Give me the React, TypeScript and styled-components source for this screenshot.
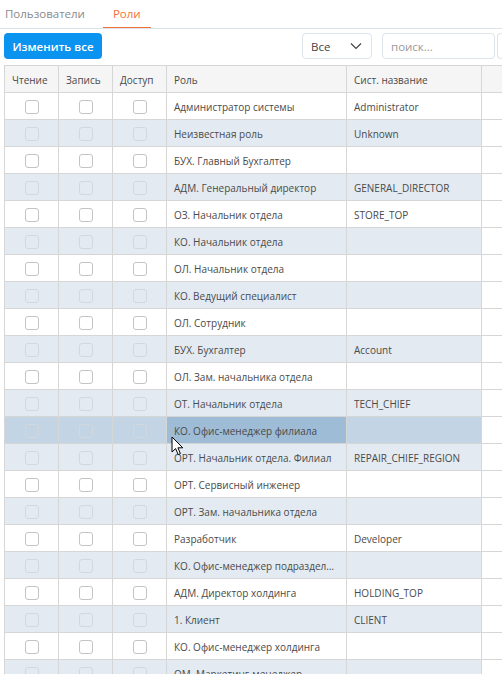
import React from "react";
import styled, { createGlobalStyle } from "styled-components";

type Role = {
  name: string;
  code?: string;
};

const ROLES: Role[] = [
  { name: "Администратор системы", code: "Administrator" },
  { name: "Неизвестная роль", code: "Unknown" },
  { name: "БУХ. Главный Бухгалтер" },
  { name: "АДМ. Генеральный директор", code: "GENERAL_DIRECTOR" },
  { name: "ОЗ. Начальник отдела", code: "STORE_TOP" },
  { name: "КО. Начальник отдела" },
  { name: "ОЛ. Начальник отдела" },
  { name: "КО. Ведущий специалист" },
  { name: "ОЛ. Сотрудник" },
  { name: "БУХ. Бухгалтер", code: "Account" },
  { name: "ОЛ. Зам. начальника отдела" },
  { name: "ОТ. Начальник отдела", code: "TECH_CHIEF" },
  { name: "КО. Офис-менеджер филиала" },
  { name: "ОРТ. Начальник отдела. Филиал", code: "REPAIR_CHIEF_REGION" },
  { name: "ОРТ. Сервисный инженер" },
  { name: "ОРТ. Зам. начальника отдела" },
  { name: "Разработчик", code: "Developer" },
  { name: "КО. Офис-менеджер подразделения" },
  { name: "АДМ. Директор холдинга", code: "HOLDING_TOP" },
  { name: "1. Клиент", code: "CLIENT" },
  { name: "КО. Офис-менеджер холдинга" },
  { name: "ОМ. Маркетинг-менеджер" },
];

// row under the mouse pointer in the screenshot
const HOVER_INDEX = 12;

const GlobalStyle = createGlobalStyle`
  html, body {
    margin: 0;
    padding: 0;
    background: #fff;
    overflow: hidden;
  }
  body {
    font-family: "Open Sans", "Noto Sans", sans-serif;
    color: #4a4a4a;
  }
`;

export default function App() {
  return (
    <Page>
      <GlobalStyle />
      <Tabs>
        <Tab>Пользователи</Tab>
        <Tab $active>Роли</Tab>
      </Tabs>
      <Toolbar>
        <PrimaryButton>Изменить все</PrimaryButton>
        <Spacer />
        <Select>
          <span>Все</span>
          <svg width="12" height="8" viewBox="0 0 12 8">
            <path d="M1 1.5 L6 6.5 L11 1.5" fill="none" stroke="#444" strokeWidth="1.2" />
          </svg>
        </Select>
        <Search placeholder="поиск..." />
        <Extra />
      </Toolbar>
      <Table>
        <thead>
          <tr>
            <Th $w={54}>Чтение</Th>
            <Th $w={54}>Запись</Th>
            <Th $w={54}>Доступ</Th>
            <Th $w={180}>Роль</Th>
            <Th $w={135}>Сист. название</Th>
            <Th />
          </tr>
        </thead>
        <tbody>
          {ROLES.map((role, i) => {
            const striped = i % 2 === 1;
            const hovered = i === HOVER_INDEX;
            return (
              <Row key={i} $striped={striped} $hovered={hovered}>
                <CheckCell><Check $faded={striped || hovered} /></CheckCell>
                <CheckCell><Check $faded={striped || hovered} /></CheckCell>
                <CheckCell><Check $faded={striped || hovered} /></CheckCell>
                <Td $focus={hovered}>{role.name}</Td>
                <Td>{role.code}</Td>
                <EmptyTd />
              </Row>
            );
          })}
        </tbody>
      </Table>
      <Cursor width="14" height="21" viewBox="0 0 14 21">
        <path
          d="M1 1 L1 16 L4.6 12.6 L7.2 18.6 L9.4 17.6 L6.9 11.8 L11.8 11.8 Z"
          fill="#fff"
          stroke="#000"
          strokeWidth="1"
          strokeLinejoin="round"
        />
      </Cursor>
    </Page>
  );
}

const Page = styled.div`
  position: relative;
  width: 502px;
  height: 674px;
  overflow: hidden;
`;

const Tabs = styled.div`
  display: flex;
  gap: 8px;
  height: 28px;
  border-bottom: 1px solid #dbe4ec;
`;

const Tab = styled.div<{ $active?: boolean }>`
  display: flex;
  align-items: center;
  padding: 0 10px 1px;
  font-size: 11.5px;
  color: ${(p) => (p.$active ? "#f2703a" : "#8a8a8a")};
  box-shadow: ${(p) => (p.$active ? "inset 0 -1px 0 #f2703a" : "none")};

  &:first-child {
    padding-left: 5px;
  }
`;

const Toolbar = styled.div`
  display: flex;
  align-items: center;
  gap: 10px;
  padding: 4px 0 0 4px;
  height: 26px;
`;

const PrimaryButton = styled.button`
  height: 26px;
  width: 98px;
  border: none;
  border-radius: 4px;
  background: #0a93ef;
  color: #fff;
  font-family: "Open Sans", sans-serif;
  font-size: 11.5px;
  font-weight: 600;
  padding: 0;
`;

const Spacer = styled.div`
  flex: 1;
`;

const Select = styled.div`
  box-sizing: border-box;
  width: 70px;
  height: 26px;
  border: 1px solid #dde4eb;
  border-radius: 4px;
  display: flex;
  align-items: center;
  justify-content: space-between;
  padding: 0 9px 0 8px;
  font-size: 11.5px;
  color: #444;
`;

const Search = styled.input`
  box-sizing: border-box;
  width: 113px;
  height: 26px;
  border: 1px solid #dde4eb;
  border-radius: 4px;
  padding: 0 8px;
  font-family: "Open Sans", sans-serif;
  font-size: 11.5px;
  outline: none;

  &::placeholder {
    color: #9a9a9a;
  }
`;

const Extra = styled.div`
  box-sizing: border-box;
  flex-shrink: 0;
  width: 10px;
  height: 26px;
  margin-left: -8px;
  margin-right: -5px;
  border: 1px solid #dde4eb;
  border-right: none;
  border-radius: 4px 0 0 4px;
`;

const Table = styled.table`
  margin: 6px 0 0 4px;
  border-collapse: collapse;
  table-layout: fixed;
  width: 520px;
  font-size: 10px;
`;

const Th = styled.th<{ $w?: number }>`
  ${(p) => (p.$w ? `width: ${p.$w}px;` : "")}
  height: 27px;
  padding: 1px 7px 0;
  box-sizing: border-box;
  text-align: left;
  font-weight: 400;
  color: #4a4a4a;
  background: #f5f5f5;
  border: 1px solid #d6d6d6;
  white-space: nowrap;
`;

const Row = styled.tr<{ $striped: boolean; $hovered: boolean }>`
  height: 27px;
  background: ${(p) => (p.$hovered ? "#c3d4e4" : p.$striped ? "#e3eaf2" : "#fff")};
`;

const Td = styled.td<{ $focus?: boolean }>`
  padding: 1px 7px 0;
  border: 1px solid #d6d6d6;
  white-space: nowrap;
  overflow: hidden;
  text-overflow: ellipsis;
  color: #4a4a4a;
  ${(p) => (p.$focus ? "background: #9fbcd6;" : "")}
`;

const CheckCell = styled.td`
  padding: 0;
  border: 1px solid #d6d6d6;
  text-align: center;
  vertical-align: middle;
`;

const EmptyTd = styled.td`
  border: 1px solid #d6d6d6;
  background: #fff;
`;

const Check = styled.span<{ $faded: boolean }>`
  display: inline-block;
  vertical-align: middle;
  box-sizing: border-box;
  width: 14px;
  height: 14px;
  border-radius: 3px;
  border: 1px solid ${(p) => (p.$faded ? "#d2d8de" : "#c4c4c4")};
  background: ${(p) => (p.$faded ? "transparent" : "#fff")};
`;

const Cursor = styled.svg`
  position: absolute;
  left: 171px;
  top: 436px;
  pointer-events: none;
`;
